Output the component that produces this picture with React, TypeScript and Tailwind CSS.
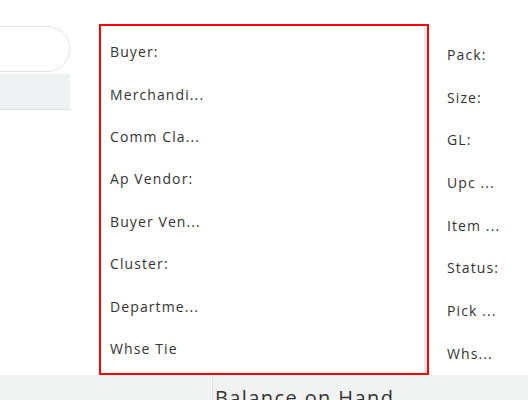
import React from 'react';

const leftLabels = ['Buyer:', 'Merchandi...', 'Comm Cla...', 'Ap Vendor:', 'Buyer Ven...', 'Cluster:', 'Departme...', 'Whse Tie'];
const rightLabels = ['Pack:', 'Size:', 'GL:', 'Upc ...', 'Item ...', 'Status:', 'Pick ...', 'Whs...'];

export default function App() {
    return (
        <div className="w-[528px] h-[400px] overflow-hidden bg-white flex flex-col font-['Open_Sans',sans-serif] text-[#333333]">
            <div className="flex h-[375px] shrink-0">
                {/* Search input + toolbar strip */}
                <div className="w-[70px] shrink-0 pt-[26px] flex flex-col">
                    <div className="h-[46px] w-[100px] -ml-[30px] border border-[#e4e4e4] rounded-r-[22px] bg-white" />
                    <div className="mt-[2px] h-[36px] bg-[#f0f1f3] border-b border-[#dfe0e2]" />
                </div>

                {/* Selected field group */}
                <div className="ml-[29px] mt-[24px] w-[330px] h-[351px] border-2 border-[#ff0000] shrink-0">
                    <div className="h-full border-r-[3px] border-[#e8e8e8] pt-[4.5px] pl-[9px] flex flex-col">
                        {leftLabels.map((label) => (
                            <div key={label} className="h-[42.4px] shrink-0 flex items-center text-[14px] tracking-[1.1px] whitespace-nowrap">
                                {label}
                            </div>
                        ))}
                    </div>
                </div>

                {/* Right field column */}
                <div className="pl-[18px] pt-[33px] flex flex-col">
                    {rightLabels.map((label) => (
                        <div key={label} className="h-[42.7px] shrink-0 flex items-center text-[14px] tracking-[1.1px] whitespace-nowrap">
                            {label}
                        </div>
                    ))}
                </div>
            </div>

            {/* Bottom header bar */}
            <div className="flex h-[25px] shrink-0 bg-[#f1f2f2] overflow-hidden">
                <div className="w-[213px] shrink-0 border-r border-[#e2e3e3]" />
                <div className="pl-[2px] pt-[9px] text-[20px] leading-[28px] tracking-[1.4px] whitespace-nowrap">
                    Balance on Hand
                </div>
            </div>
        </div>
    );
}
